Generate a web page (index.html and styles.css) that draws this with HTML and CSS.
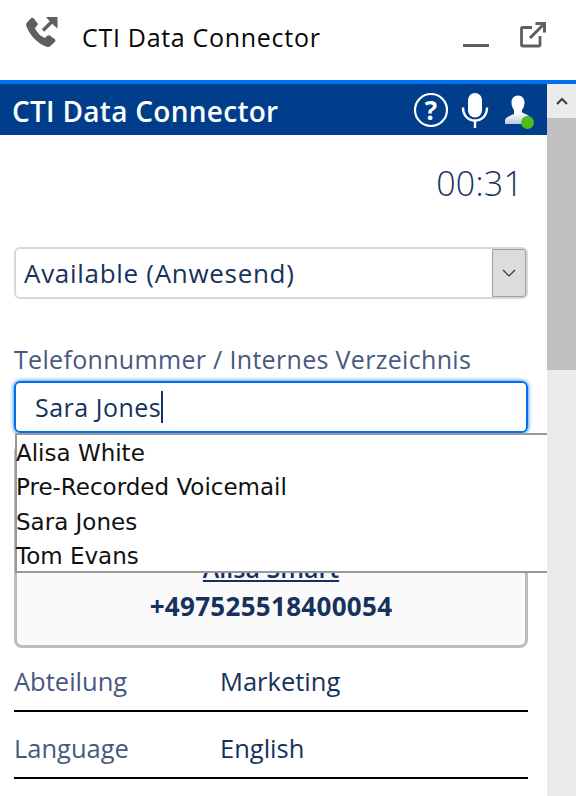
FILE: index.html
```html
<!DOCTYPE html>
<html lang="de">
<head>
<meta charset="utf-8">
<title>CTI Data Connector</title>
<link rel="stylesheet" href="styles.css">
</head>
<body>
<header class="utility">
  <svg class="utility-phone" viewBox="0 0 32 32" width="32" height="32"><path fill="#5f5f5b" d="M1 6.500 5 2.200c.8-.8 2-.7 2.700.1l3.600 4.700c.6.800.5 1.800-.2 2.500L9 12.100c1.500 4.200 5.600 8.300 9.800 9.800l2.500-2.200c.7-.6 1.700-.7 2.500-.1l4.800 3.500c.9.700 1 2 .2 2.800l-4.300 4.100c-1 .9-2.500 1.200-3.800.7C12.200 28 3.900 19.700 .4 10.300-.1 9 0 7.500 1 6.500Z"/><path fill="none" stroke="#5f5f5b" stroke-width="3.600" d="M17 14.500 28 3.500"/><path fill="#5f5f5b" d="M20 1h11.500v11.500l-3.500-3-5-5Z"/></svg>
  <span class="utility-title">CTI Data Connector</span>
  <span class="utility-minimize"></span>
  <svg class="utility-popout" viewBox="0 0 28 28" width="28" height="28"><path fill="none" stroke="#5f5f5b" stroke-width="2.800" d="M13 6.500H3.500a1 1 0 0 0-1 1V24a1 1 0 0 0 1 1H20a1 1 0 0 0 1-1V15"/><path fill="none" stroke="#5f5f5b" stroke-width="3" d="M11 17 25 3M16.500 2.500h9v9"/></svg>
</header>
<div class="panel">
  <main class="softphone">
    <div class="softphone-bar">
      <span class="softphone-title">CTI Data Connector</span>
      <div class="softphone-icons">
        <span class="help-icon">
          <svg viewBox="0 0 36 36" width="36" height="36"><circle cx="18" cy="18" r="16" fill="none" stroke="#fff" stroke-width="2.200"/></svg>
          <span class="help-mark">?</span>
        </span>
        <svg viewBox="0 0 30 36" width="30" height="36"><rect x="8" y="1" width="14" height="24.500" rx="7" fill="#fff"/><path d="M3 15.500c0 8 5 13 12 13s12-5 12-13" fill="none" stroke="#fff" stroke-width="2.400"/><path d="M15 28v8" stroke="#fff" stroke-width="2.400"/></svg>
        <span class="agent">
          <svg viewBox="0 0 30 32" width="30" height="32"><defs><linearGradient id="agentFade" x1="0" y1="0" x2="0" y2="1"><stop offset=".6" stop-color="#fff"/><stop offset="1" stop-color="#b9c8dc"/></linearGradient></defs><path fill="url(#agentFade)" d="M14 1.500c4 0 6.500 3 6.500 7 0 3-1 5.500-2.500 7.500v2.500c2 1.200 5 1.800 7 3.500v8H1v-3.500c0-3.500 5-4.500 9-6.500V16c-1.500-2-2.500-4.500-2.500-7.500 0-4 2.500-7 6.500-7Z"/></svg>
          <span class="agent-status"></span>
        </span>
      </div>
    </div>
    <div class="softphone-body">
      <div class="timer">00:31</div>
      <div class="status-select">
        <span class="status-value">Available (Anwesend)</span>
        <span class="status-arrow"><svg viewBox="0 0 14 8" width="14" height="8"><path d="M1 1l6 6 6-6" fill="none" stroke="#333" stroke-width="1.200"/></svg></span>
      </div>
      <label class="field-label">Telefonnummer / Internes Verzeichnis</label>
      <div class="search-wrap">
        <div class="search-input">Sara Jones<span class="caret"></span></div>
        <ul class="suggestions">
          <li>Alisa White</li>
          <li>Pre-Recorded Voicemail</li>
          <li>Sara Jones</li>
          <li>Tom Evans</li>
        </ul>
      </div>
      <section class="contact-card">
        <a class="contact-name">Alisa Smart</a>
        <div class="contact-number">+497525518400054</div>
      </section>
      <dl class="details">
        <div class="detail-row"><dt>Abteilung</dt><dd>Marketing</dd></div>
        <div class="detail-row"><dt>Language</dt><dd>English</dd></div>
      </dl>
    </div>
  </main>
  <aside class="scrollbar">
    <div class="scroll-button"><svg viewBox="0 0 12 8" width="12" height="8"><path d="M1 7l5-5 5 5" fill="none" stroke="#3a3a3a" stroke-width="2"/></svg></div>
    <div class="scroll-thumb"></div>
  </aside>
</div>
</body>
</html>
```
FILE: styles.css
```css
* { box-sizing: border-box; }
html, body { margin: 0; padding: 0; height: 100%; overflow: hidden; background: #fff; }
body { font-family: "Open Sans", "Noto Sans", sans-serif; color: #16325c; }

.utility { height: 80px; display: flex; align-items: flex-start; position: relative; padding: 16px 29px 0 26px; }
.utility-phone { flex: none; }
.utility-title { margin-left: 24px; margin-top: 3px; font-size: 25px; letter-spacing: .7px; line-height: 36px; color: #080707; white-space: nowrap; }
.utility-minimize { margin-left: auto; margin-top: 28px; width: 26px; height: 3px; background: #5f5f5b; }
.utility-popout { margin-left: 30px; margin-top: 5px; }

.panel { display: flex; height: 716px; border-top: 4px solid #0070ee; }
.softphone { width: 547px; flex: none; }
.softphone-bar { height: 51px; background: #003d8a; display: flex; align-items: center; justify-content: space-between; padding: 0 13px 0 12px; }
.softphone-title { color: #fff; font-size: 28px; letter-spacing: .28px; font-weight: 600; white-space: nowrap; padding-top: 2px; }
.softphone-icons { display: flex; align-items: center; gap: 11px; }
.help-icon { position: relative; display: block; width: 36px; height: 36px; }
.help-mark { position: absolute; left: 0; right: 0; top: 0; height: 36px; text-align: center; font-size: 26px; font-weight: 700; line-height: 36px; color: #fff; }
.agent { position: relative; display: block; width: 30px; height: 32px; margin-left: 3px; }
.agent-status { position: absolute; right: .5px; bottom: -3px; width: 13px; height: 13px; border-radius: 50%; background: #4bbf17; }

.softphone-body { padding: 0 19px 0 14px; }
.timer { text-align: right; font-size: 34px; letter-spacing: .2px; font-weight: 300; line-height: 44px; margin-top: 26px; padding-right: 5px; color: #16325c; }
.status-select { margin-top: 42px; height: 52px; display: flex; border: 2px solid #d4d8e2; border-radius: 6px; }
.status-value { flex: 1; padding-left: 8px; font-size: 26px; letter-spacing: .7px; line-height: 48px; white-space: nowrap; }
.status-arrow { width: 34px; background: #dcdcdc; border: 1px solid #a0a0a0; display: flex; align-items: center; justify-content: center; border-radius: 0 3px 3px 0; }
.field-label { display: block; margin-top: 44px; font-size: 25px; letter-spacing: .32px; line-height: 33px; color: #46597f; white-space: nowrap; }
.search-wrap { position: relative; margin-top: 5px; }
.search-input { height: 52px; border: 2px solid #0070ee; border-radius: 6px; box-shadow: 0 0 4px #0070ee; padding-left: 19px; font-size: 25px; letter-spacing: .5px; line-height: 48px; display: flex; align-items: center; }
.caret { display: inline-block; width: 2px; height: 32px; background: #16325c; }
.suggestions { position: absolute; z-index: 2; left: 1px; top: 52px; width: 532px; height: 140px; margin: 0; padding: 1px 0 0; list-style: none; background: #fff; border: 2px solid #999; border-right: 0; font-family: "DejaVu Sans", sans-serif; font-size: 23px; color: #111; }
.suggestions li { height: 34.300px; line-height: 34.300px; margin-left: -1px; }

.contact-card { margin-top: 11px; height: 204px; border: 3px solid #c0bcb8; border-radius: 8px; background: #fafafa; text-align: center; padding-top: 105px; color: #16325c; }
.contact-name { display: block; font-size: 25px; font-weight: 600; text-decoration: underline; line-height: 32px; }
.contact-number { font-size: 26px; letter-spacing: .3px; font-weight: 700; line-height: 36px; margin-top: 4px; }

.details { margin: 0; display: flex; flex-direction: column; gap: 3px; }
.detail-row { display: flex; height: 64px; border-bottom: 2px solid #000; align-items: center; font-size: 25.500px; padding-top: 4px; }
.detail-row dt { width: 206px; color: #46597f; }
.detail-row dd { margin: 0; color: #16325c; }

.scrollbar { width: 29px; flex: none; background: #ebebeb; }
.scroll-button { height: 34px; display: flex; align-items: center; justify-content: center; }
.scroll-thumb { height: 252px; background: #c0c0c0; }
```
